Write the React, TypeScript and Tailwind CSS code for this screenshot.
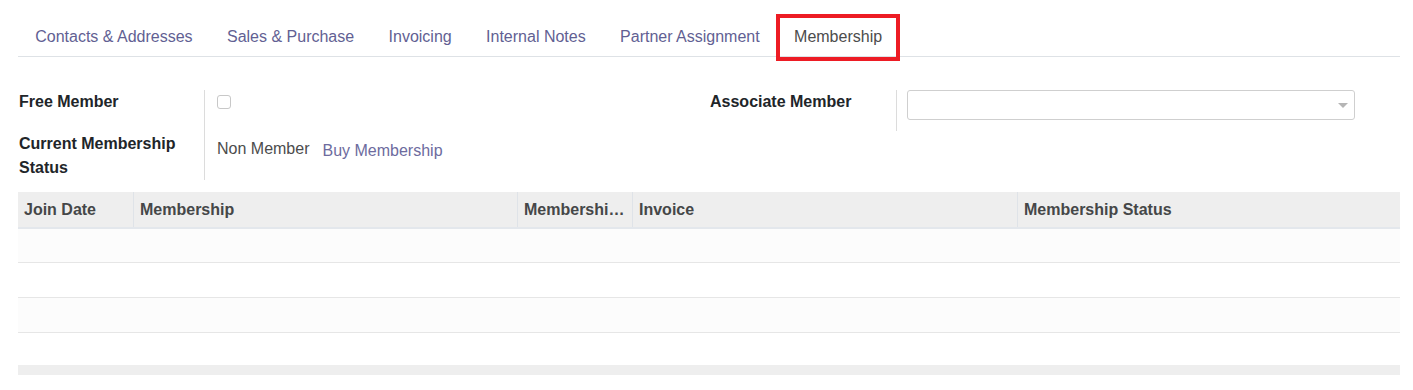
const tabs = [
  'Contacts & Addresses',
  'Sales & Purchase',
  'Invoicing',
  'Internal Notes',
  'Partner Assignment',
  'Membership',
]

const columns = [
  { label: 'Join Date', width: 'w-[115px]' },
  { label: 'Membership', width: 'w-[384px]' },
  { label: 'Membershi…', width: 'w-[115px]' },
  { label: 'Invoice', width: 'w-[385px]' },
  { label: 'Membership Status', width: 'flex-1' },
]

export default function App() {
  return (
    <div className="h-[390px] bg-white font-['Liberation_Sans',Arial,sans-serif] text-[16px] text-[#212529]">
      <div className="pl-[18px] pr-[13px] pt-[14px]">
        <ul className="flex border-b border-[#dee2e6]">
          {tabs.map(tab => {
            const active = tab === 'Membership'
            return (
              <li
                key={tab}
                className={`relative flex h-[42px] items-center px-[17.2px] pt-[4px] ${active ? 'text-[#4c4c4c]' : 'text-[#625f93]'}`}
              >
                {tab}
                {active && (
                  <span className="pointer-events-none absolute -left-[1px] -right-[1px] top-0 -bottom-[5px] border-4 border-[#ed1c24]" />
                )}
              </li>
            )
          })}
        </ul>
      </div>

      <div className="mx-[18px] mt-[33px] flex">
        <div className="grid w-[691px] grid-cols-[187px_1fr] leading-[24px]">
          <div className="border-r border-[#dcdcdc] pl-px pb-[18px] font-bold">Free Member</div>
          <div className="pl-3 pt-[5px]">
            <div className="h-[14px] w-[14px] rounded-[3px] border border-[#c8c8c8] bg-white" />
          </div>
          <div className="border-r border-[#dcdcdc] pl-px font-bold">
            Current Membership
            <br />
            Status
          </div>
          <div className="flex items-start pl-3 pt-[5px]">
            <span className="text-[#4c4c4c]">Non Member</span>
            <span className="ml-[13px] pt-[2px] text-[#6d6b9e]">Buy Membership</span>
          </div>
        </div>

        <div className="grid h-[41px] flex-1 grid-cols-[188px_1fr] leading-[24px]">
          <div className="border-r border-[#dcdcdc] pl-px font-bold">Associate Member</div>
          <div className="pl-[10px]">
            <div className="relative h-[30px] w-[448px] rounded-[3px] border border-[#cfcfcf] bg-white">
              <span className="absolute right-[6px] top-[12px] h-0 w-0 border-x-[5px] border-t-[5px] border-x-transparent border-t-[#b5b5b5]" />
            </div>
          </div>
        </div>
      </div>

      <div className="mx-[18px] mt-[12px] w-[1382px]">
        <div className="flex h-[37px] border-b-2 border-[#e3e7ec] bg-[#eeeeee] font-bold text-[#454748]">
          {columns.map((col, i) => (
            <div
              key={col.label}
              className={`${col.width} flex items-center truncate px-[6px] ${i > 0 ? 'border-l border-[#dfe3e8]' : ''}`}
            >
              {col.label}
            </div>
          ))}
        </div>
        <div className="h-[34px] border-b border-[#e6e6e6] bg-[#fcfcfc]" />
        <div className="h-[35px] border-b border-[#e6e6e6] bg-white" />
        <div className="h-[35px] border-b border-[#e6e6e6] bg-[#fcfcfc]" />
        <div className="h-[32px] bg-white" />
        <div className="h-[10px] bg-[#eeeeee]" />
      </div>
    </div>
  )
}
